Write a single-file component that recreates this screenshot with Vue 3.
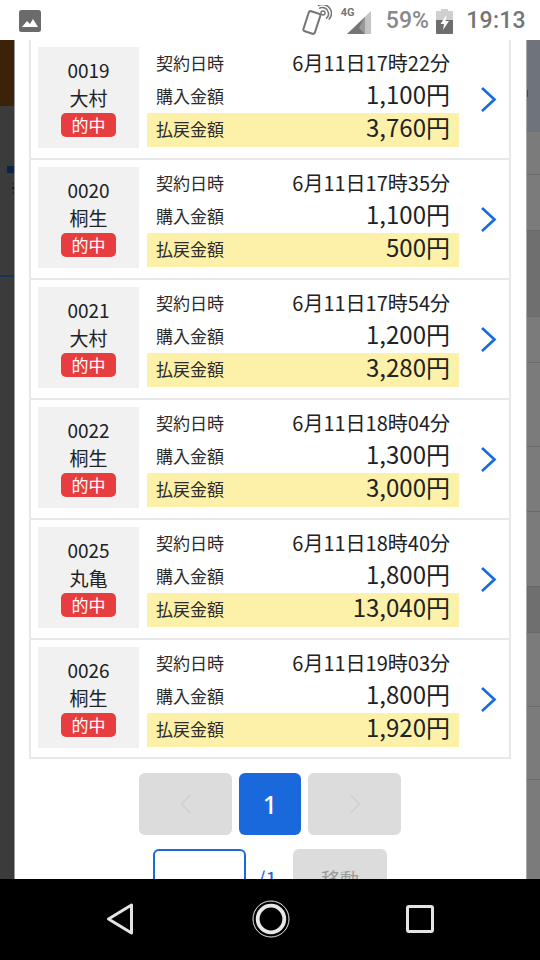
<script setup>
const rows = [
  { id: '0019', place: '大村', date: '6月11日17時22分', buy: '1,100円', pay: '3,760円' },
  { id: '0020', place: '桐生', date: '6月11日17時35分', buy: '1,100円', pay: '500円' },
  { id: '0021', place: '大村', date: '6月11日17時54分', buy: '1,200円', pay: '3,280円' },
  { id: '0022', place: '桐生', date: '6月11日18時04分', buy: '1,300円', pay: '3,000円' },
  { id: '0025', place: '丸亀', date: '6月11日18時40分', buy: '1,800円', pay: '13,040円' },
  { id: '0026', place: '桐生', date: '6月11日19時03分', buy: '1,800円', pay: '1,920円' }
]
</script>

<template>
  <div class="screen">
    <header class="status">
      <svg class="pic" width="24" height="24" viewBox="0 0 24 24">
        <rect x="1" y="1" width="22" height="22" rx="2.5" fill="#6b6b6b" />
        <path d="M4 18l5-6 3 3 3-5 5 8z" fill="#fff" />
      </svg>
      <div class="status-right">
        <svg class="nfc" width="30" height="30" viewBox="0 0 30 30">
          <rect x="4" y="7" width="12" height="21" rx="2" transform="rotate(18 10 17)" fill="none" stroke="#757575" stroke-width="2" />
          <g fill="none" stroke="#757575" stroke-width="1.500">
            <circle cx="21" cy="8" r="2" />
            <path d="M17 3.500a6 6 0 0 1 9 3 6 6 0 0 1-2 7" />
            <path d="M16 .8a9 9 0 0 1 12.800 4.200 9 9 0 0 1-2 9.500" />
          </g>
        </svg>
        <div class="signal">
          <span class="g4">4G</span>
          <svg width="24" height="23" viewBox="0 0 24 23">
            <path d="M0 23L24 0v23z" fill="#c4c4c4" />
            <path d="M0 23L18 6v17z" fill="#757575" />
            <path d="M18 6l-6 11 6 6z" fill="#9a9a9a" />
          </svg>
        </div>
        <span class="pct">59%</span>
        <svg class="batt" width="17" height="25" viewBox="0 0 17 25">
          <path d="M5 0h7v2h4a1 1 0 0 1 1 1v21a1 1 0 0 1-1 1H1a1 1 0 0 1-1-1V3a1 1 0 0 1 1-1h4z" fill="#cfcfcf" />
          <path d="M0 11h17v13a1 1 0 0 1-1 1H1a1 1 0 0 1-1-1z" fill="#6e6e6e" />
          <path d="M10.500 6L4.500 15h3.500l-1 6L13 12H9.500z" fill="#fff" />
        </svg>
        <span class="time">19:13</span>
      </div>
    </header>

    <main class="middle">
      <aside class="side side-left">
        <div class="l-brown"></div>
        <div class="l-gap-a"></div>
        <div class="l-navy"></div>
        <div class="l-note">※</div>
        <div class="l-gap-b"></div>
        <div class="l-line"></div>
        <div class="l-rest"></div>
      </aside>

      <section class="modal">
        <div class="table">
          <div v-for="r in rows" :key="r.id" class="row">
            <div class="info">
              <div class="num">{{ r.id }}</div>
              <div class="place">{{ r.place }}</div>
              <div class="badge">的中</div>
            </div>
            <div class="lines">
              <div class="line"><span class="label">契約日時</span><span class="date">{{ r.date }}</span></div>
              <div class="line"><span class="label">購入金額</span><span class="amt">{{ r.buy }}</span></div>
              <div class="line pay"><span class="label">払戻金額</span><span class="amt">{{ r.pay }}</span></div>
            </div>
            <svg class="chev" width="18" height="27" viewBox="0 0 18 27">
              <path d="M2 2l12.500 11.500L2 25" fill="none" stroke="#1a69dc" stroke-width="2.600" />
            </svg>
          </div>
        </div>

        <nav class="pager">
          <div class="pg pg-wide">
            <svg width="14" height="22" viewBox="0 0 14 22"><path d="M12 1.500L2.500 11l9.500 9.500" fill="none" stroke="#cfcfcf" stroke-width="1.500" /></svg>
          </div>
          <div class="pg pg-on">1</div>
          <div class="pg pg-wide">
            <svg width="14" height="22" viewBox="0 0 14 22"><path d="M2 1.500L11.500 11 2 20.500" fill="none" stroke="#cfcfcf" stroke-width="1.500" /></svg>
          </div>
        </nav>

        <div class="jump">
          <div class="input"></div>
          <span class="total">/1</span>
          <div class="go">移動</div>
        </div>
      </section>

      <aside class="side side-right">
        <div class="r-blue"><i class="tick"></i></div>
        <div class="r-cell r-h43"></div>
        <div class="r-cell r-h56"></div>
        <div class="r-cell r-dark r-h86"></div>
        <div class="r-cell r-h46"></div>
        <div class="r-cell r-h84"></div>
        <div class="r-cell r-h65"></div>
        <div class="r-cell r-h75"></div>
        <div class="r-cell r-dark r-h46"></div>
        <div class="r-cell r-h74"></div>
        <div class="r-cell r-h73"></div>
        <div class="r-cell r-h24"></div>
      </aside>
    </main>

    <footer class="navbar">
      <svg width="30" height="34" viewBox="0 0 30 34">
        <path d="M25.500 3v28L2.500 17z" fill="none" stroke="#e4e4e4" stroke-width="3" stroke-linejoin="round" />
      </svg>
      <svg width="38" height="38" viewBox="0 0 38 38">
        <circle cx="19" cy="19" r="18" fill="none" stroke="#e8e8e8" stroke-width="1" />
        <circle cx="19" cy="19" r="13.300" fill="none" stroke="#e8e8e8" stroke-width="3.800" />
      </svg>
      <svg width="28" height="28" viewBox="0 0 28 28">
        <rect x="1.500" y="1.500" width="25" height="25" rx="1.500" fill="none" stroke="#e4e4e4" stroke-width="3" />
      </svg>
    </footer>
  </div>
</template>

<style scoped>
.screen {
  width: 540px;
  height: 960px;
  display: flex;
  flex-direction: column;
  overflow: hidden;
  background: #fff;
  font-family: "Noto Sans CJK JP", "Noto Sans", sans-serif;
  color: #222;
}
.status {
  height: 40px;
  flex: none;
  display: flex;
  align-items: center;
  justify-content: space-between;
  padding: 2px 14px 0 18px;
  box-sizing: border-box;
  color: #757575;
}
.status-right { display: flex; align-items: center; }
.nfc { margin-top: -2px; }
.signal { display: flex; align-items: flex-end; margin-left: 9px; position: relative; width: 30px; height: 26px; justify-content: flex-end; }
.g4 { position: absolute; left: 0; top: -2px; font: 700 11px/14px Roboto, sans-serif; }
.pct { font: 500 23px/26px Roboto, sans-serif; color: #8a8a8a; margin-left: 15px; letter-spacing: .1px; }
.batt { margin-left: 7px; }
.time { font: 500 23px/26px Roboto, sans-serif; margin-left: 13px; letter-spacing: .3px; }

.middle { flex: 1; min-height: 0; display: flex; }
.side { width: 14px; flex: none; display: flex; flex-direction: column; }
.side-left { background: #3b3b3b; border-right: 1px solid #9a9a9a; overflow: hidden; }
.l-brown { height: 66px; background: #3c2208; flex: none; }
.l-gap-a { height: 60px; flex: none; }
.l-navy { height: 7px; width: 7px; margin-left: 7px; background: #0c2350; flex: none; }
.l-note { height: 30px; padding: 5px 0 0 10px; box-sizing: border-box; font-size: 15px; line-height: 20px; color: #111; overflow: hidden; white-space: nowrap; flex: none; }
.l-gap-b { height: 72px; flex: none; }
.l-line { height: 2px; background: #16325f; flex: none; }
.l-rest { flex: 1; }

.modal { width: 511px; flex: none; padding: 0 15px 0 14px; box-sizing: border-box; background: #fff; overflow: hidden; }
.table { border: 2px solid #e8e8e8; border-top: 0; }
.row {
  display: flex;
  align-items: stretch;
  padding: 7px 0 9px 7px;
  box-sizing: border-box;
  border-bottom: 2px solid #e8e8e8;
  height: 120px;
}
.row:last-child { border-bottom: 0; height: 117px; padding-bottom: 7px; }
.info {
  width: 101px;
  height: 101px;
  flex: none;
  background: #f1f1f1;
  display: flex;
  flex-direction: column;
  align-items: center;
  padding-top: 9px;
  box-sizing: border-box;
}
.num, .place { font-size: 19px; line-height: 28px; }
.badge {
  width: 55px;
  height: 24px;
  margin-top: 1px;
  border-radius: 5px;
  background: #e83d3f;
  color: #fff;
  font-size: 17px;
  line-height: 23px;
  text-align: center;
}
.lines { width: 312px; margin-left: 8px; flex: none; display: flex; flex-direction: column; }
.line { height: 33px; display: flex; align-items: center; justify-content: space-between; padding: 0 9px 3px; box-sizing: border-box; }
.line.pay { height: 34px; background: #fdf0a8; }
.label { font-size: 17px; line-height: 29px; color: #2b2b2b; }
.date { font-size: 20px; line-height: 29px; }
.amt { font-size: 24px; line-height: 29px; margin-bottom: 4px; }
.chev { flex: none; margin: 39px 0 0 21px; }

.pager { display: flex; justify-content: center; gap: 7px; margin-top: 14px; }
.pg { height: 62px; border-radius: 6px; display: flex; align-items: center; justify-content: center; }
.pg-wide { width: 93px; background: #dcdcdc; }
.pg-on { width: 62px; background: #1a69dc; color: #fff; font: 500 25px/62px "Noto Sans", sans-serif; }
.jump { display: flex; justify-content: center; align-items: flex-start; margin-top: 14px; height: 60px; }
.input { width: 93px; height: 60px; box-sizing: border-box; border: 2px solid #1a69dc; border-radius: 6px; }
.total { width: 47px; padding-left: 11px; box-sizing: border-box; color: #1a69dc; font-size: 21px; line-height: 26px; margin-top: 16px; }
.go { width: 94px; height: 60px; background: #dcdcdc; border-radius: 6px; color: #9a9a9a; font-size: 19px; line-height: 60px; text-align: center; }

.side-right { background: #7b7b7b; border-left: 1px solid #a8a8a8; }
.r-blue { height: 92px; flex: none; background: #6f737a; position: relative; }
.tick { position: absolute; left: 0; top: 50px; width: 1px; height: 7px; background: #24508f; }
.r-cell { flex: none; border-bottom: 1px solid #6a6a6a; box-sizing: border-box; }
.r-dark { background: #6f6f6f; }
.r-h24 { height: 24px; border-bottom: 0; }
.r-h43 { height: 43px; }
.r-h46 { height: 46px; }
.r-h56 { height: 56px; }
.r-h65 { height: 65px; }
.r-h73 { height: 73px; }
.r-h74 { height: 74px; }
.r-h75 { height: 75px; }
.r-h84 { height: 84px; }
.r-h86 { height: 86px; }

.navbar {
  height: 81px;
  flex: none;
  background: #000;
  display: flex;
  align-items: center;
  justify-content: space-between;
  padding: 0 106px 2px;
  box-sizing: border-box;
}
</style>
